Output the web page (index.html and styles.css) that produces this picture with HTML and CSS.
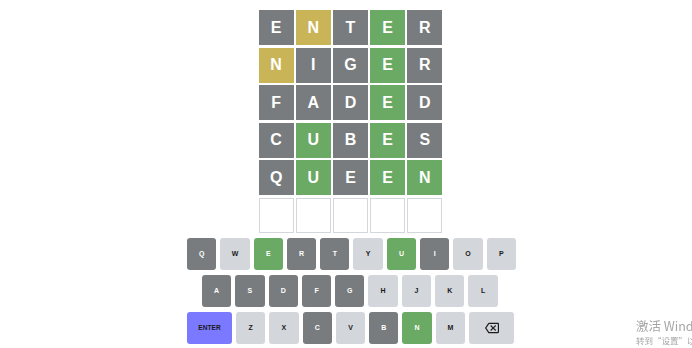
FILE: index.html
```html
<!DOCTYPE html>
<html lang="en">
<head>
<meta charset="utf-8">
<title>Wordle</title>
<link rel="stylesheet" href="styles.css">
</head>
<body>
<div class="app">
  <div class="board">
    <div class="tile absent">E</div><div class="tile present">N</div><div class="tile absent">T</div><div class="tile correct">E</div><div class="tile absent">R</div>
    <div class="tile present">N</div><div class="tile absent">I</div><div class="tile absent">G</div><div class="tile correct">E</div><div class="tile absent">R</div>
    <div class="tile absent">F</div><div class="tile absent">A</div><div class="tile absent">D</div><div class="tile correct">E</div><div class="tile absent">D</div>
    <div class="tile absent">C</div><div class="tile correct">U</div><div class="tile absent">B</div><div class="tile correct">E</div><div class="tile absent">S</div>
    <div class="tile absent">Q</div><div class="tile correct">U</div><div class="tile absent">E</div><div class="tile correct">E</div><div class="tile correct">N</div>
    <div class="tile empty"></div><div class="tile empty"></div><div class="tile empty"></div><div class="tile empty"></div><div class="tile empty"></div>
  </div>
  <div class="keyboard">
    <div class="krow">
      <button class="key absent">Q</button><button class="key">W</button><button class="key correct">E</button><button class="key absent">R</button><button class="key absent">T</button><button class="key">Y</button><button class="key correct">U</button><button class="key absent">I</button><button class="key">O</button><button class="key">P</button>
    </div>
    <div class="krow">
      <div class="spacer"></div>
      <button class="key absent">A</button><button class="key absent">S</button><button class="key absent">D</button><button class="key absent">F</button><button class="key absent">G</button><button class="key">H</button><button class="key">J</button><button class="key">K</button><button class="key">L</button>
      <div class="spacer"></div>
    </div>
    <div class="krow">
      <button class="key wide enter">ENTER</button><button class="key">Z</button><button class="key">X</button><button class="key absent">C</button><button class="key">V</button><button class="key absent">B</button><button class="key correct">N</button><button class="key">M</button>
      <button class="key wide" aria-label="backspace"><svg class="bs" viewBox="0 0 24 24" width="14" height="14"><path fill="#1a1a1b" d="M22 3H7c-.69 0-1.23.35-1.59.88L0 12l5.41 8.11c.36.53.9.89 1.59.89h15c1.1 0 2-.9 2-2V5c0-1.1-.9-2-2-2zm0 16H7.07L2.4 12l4.66-7H22v14zm-11.59-2L14 13.41 17.59 17 19 15.59 15.41 12 19 8.41 17.59 7 14 10.59 10.41 7 9 8.41 12.59 12 9 15.59z"/></svg></button>
    </div>
  </div>
</div>
<div class="watermark">
  <div class="wm1">激活 Windows</div>
  <div class="wm2">转到“设置”以激活 Windows。</div>
</div>
</body>
</html>
```
FILE: styles.css
```css
html, body {
  margin: 0;
  padding: 0;
  background: #ffffff;
  overflow: hidden;
}
body {
  font-family: "Liberation Sans", Arial, sans-serif;
  width: 692px;
  height: 348px;
}
.app {
  display: flex;
  flex-direction: column;
  align-items: center;
  padding: 10px 0 0 9px;
}
.board {
  display: grid;
  grid-template-columns: repeat(5, 35px);
  grid-auto-rows: 35px;
  column-gap: 2.2px;
  row-gap: 2.5px;
}
.tile {
  box-sizing: border-box;
  display: flex;
  align-items: center;
  justify-content: center;
  font-size: 16px;
  font-weight: bold;
  color: #ffffff;
  text-transform: uppercase;
}
.tile.absent { background: #787c7e; }
.tile.present { background: #c9b458; }
.tile.correct { background: #6aaa64; }
.tile.empty { border: 1px solid #d3d6da; background: #fff; }
.keyboard {
  width: 327px;
  margin-top: 5px;
  display: flex;
  flex-direction: column;
  gap: 5px;
}
.krow {
  display: flex;
  gap: 4px;
}
.key {
  font-family: "Liberation Sans", Arial, sans-serif;
  box-sizing: border-box;
  width: 29.3px;
  height: 32px;
  flex: none;
  border: 0;
  padding: 0;
  border-radius: 3px;
  background: #d3d6da;
  color: #1a1a1b;
  font-size: 7px;
  font-weight: bold;
  display: flex;
  align-items: center;
  justify-content: center;
}
.key.absent { background: #787c7e; color: #fff; }
.key.correct { background: #6aaa64; color: #fff; }
.key.wide { width: 45px; }
.key.enter { background: #7b79ff; color: #1a1a1b; font-size: 6.6px; }
.spacer { width: 11px; flex: none; }
.bs { display: block; }
.watermark {
  position: fixed;
  left: 636px;
  top: 317px;
  color: #a6a6a6;
  font-family: "Noto Sans CJK SC", "Liberation Sans", sans-serif;
  white-space: nowrap;
}
.wm1 { font-size: 12.5px; line-height: 17px; }
.wm2 { font-size: 8.5px; line-height: 13px; }
```
